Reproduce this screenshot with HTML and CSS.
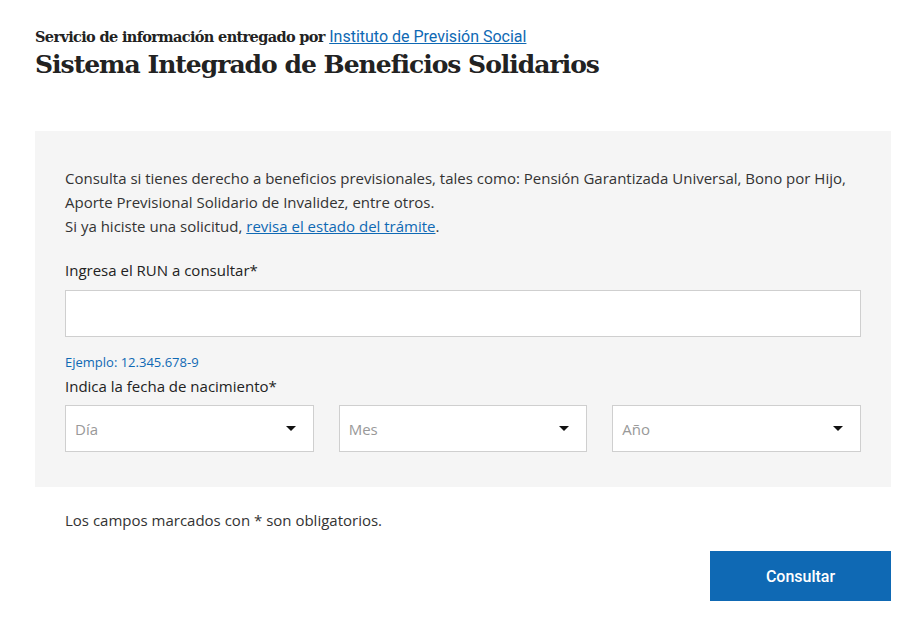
FILE: index.html
```html
<!DOCTYPE html>
<html lang="es">
<head>
<meta charset="utf-8">
<title>Sistema Integrado de Beneficios Solidarios</title>
<link rel="stylesheet" href="styles.css">
</head>
<body>
<div class="page">
  <header class="header">
    <p class="subtitle">Servicio de información entregado por <a href="#" class="inst-link">Instituto de Previsión Social</a></p>
    <h1 class="title">Sistema Integrado de Beneficios Solidarios</h1>
  </header>

  <section class="panel">
    <p class="intro">Consulta si tienes derecho a beneficios previsionales, tales como: Pensión Garantizada Universal, Bono por Hijo, Aporte Previsional Solidario de Invalidez, entre otros.<br>Si ya hiciste una solicitud, <a href="#" class="link">revisa el estado del trámite</a>.</p>

    <label class="label label-run">Ingresa el RUN a consultar*</label>
    <div class="input"></div>
    <p class="hint">Ejemplo: 12.345.678-9</p>

    <label class="label label-date">Indica la fecha de nacimiento*</label>
    <div class="selects">
      <div class="select"><span class="placeholder">Día</span><span class="caret"></span></div>
      <div class="select"><span class="placeholder">Mes</span><span class="caret"></span></div>
      <div class="select"><span class="placeholder">Año</span><span class="caret"></span></div>
    </div>
  </section>

  <p class="required">Los campos marcados con * son obligatorios.</p>
  <div class="actions">
    <button class="btn">Consultar</button>
  </div>
</div>
</body>
</html>
```
FILE: styles.css
```css
* { box-sizing: border-box; }
body {
  margin: 0;
  background: #fff;
  color: #333;
  font-family: "Open Sans", "Noto Sans", sans-serif;
}
.page {
  padding: 26px 22px 0 35px;
}
.subtitle {
  margin: 0;
  font-family: "DejaVu Serif", serif;
  font-weight: bold;
  font-size: 14.5px;
  line-height: 22px;
  color: #222;
  letter-spacing: -0.65px;
}
.inst-link {
  font-family: Roboto, sans-serif;
  font-weight: normal;
  font-size: 16px;
  letter-spacing: 0;
  color: #0f69b4;
  text-decoration: underline;
}
.title {
  margin: 0;
  font-family: "DejaVu Serif", serif;
  font-weight: bold;
  font-size: 25px;
  line-height: 34px;
  color: #222;
  letter-spacing: -1px;
}
.panel {
  margin-top: 49px;
  background: #f5f5f5;
  padding: 35px 30px 35px 30px;
}
.intro {
  margin: 0;
  font-size: 15px;
  line-height: 24px;
  color: #333;
}
.link {
  color: #0f69b4;
  text-decoration: underline;
}
.label {
  display: block;
  font-size: 15px;
  line-height: 24px;
  color: #222;
}
.label-run { margin-top: 20px; }
.input {
  margin-top: 8px;
  height: 47px;
  background: #fff;
  border: 1px solid #cfcfcf;
}
.hint {
  margin: 15px 0 0;
  font-size: 13px;
  line-height: 20px;
  color: #0f69b4;
}
.label-date { margin-top: 2px; }
.selects {
  margin-top: 7px;
  display: grid;
  grid-template-columns: repeat(3, 1fr);
  gap: 25px;
}
.select {
  height: 47px;
  background: #fff;
  border: 1px solid #cfcfcf;
  display: flex;
  align-items: center;
  justify-content: space-between;
  padding: 0 17px 0 9px;
}
.placeholder {
  font-size: 15px;
  color: #999;
}
.caret {
  width: 0;
  height: 0;
  border-left: 5px solid transparent;
  border-right: 5px solid transparent;
  border-top: 5px solid #111;
}
.required {
  margin: 21px 0 0;
  padding-left: 30px;
  font-size: 15px;
  line-height: 24px;
  color: #333;
}
.actions {
  margin-top: 19px;
  display: flex;
  justify-content: flex-end;
}
.btn {
  width: 181px;
  height: 50px;
  border: none;
  background: #0f69b4;
  color: #fff;
  font-family: Roboto, sans-serif;
  font-weight: 500;
  font-size: 16px;
}
```
